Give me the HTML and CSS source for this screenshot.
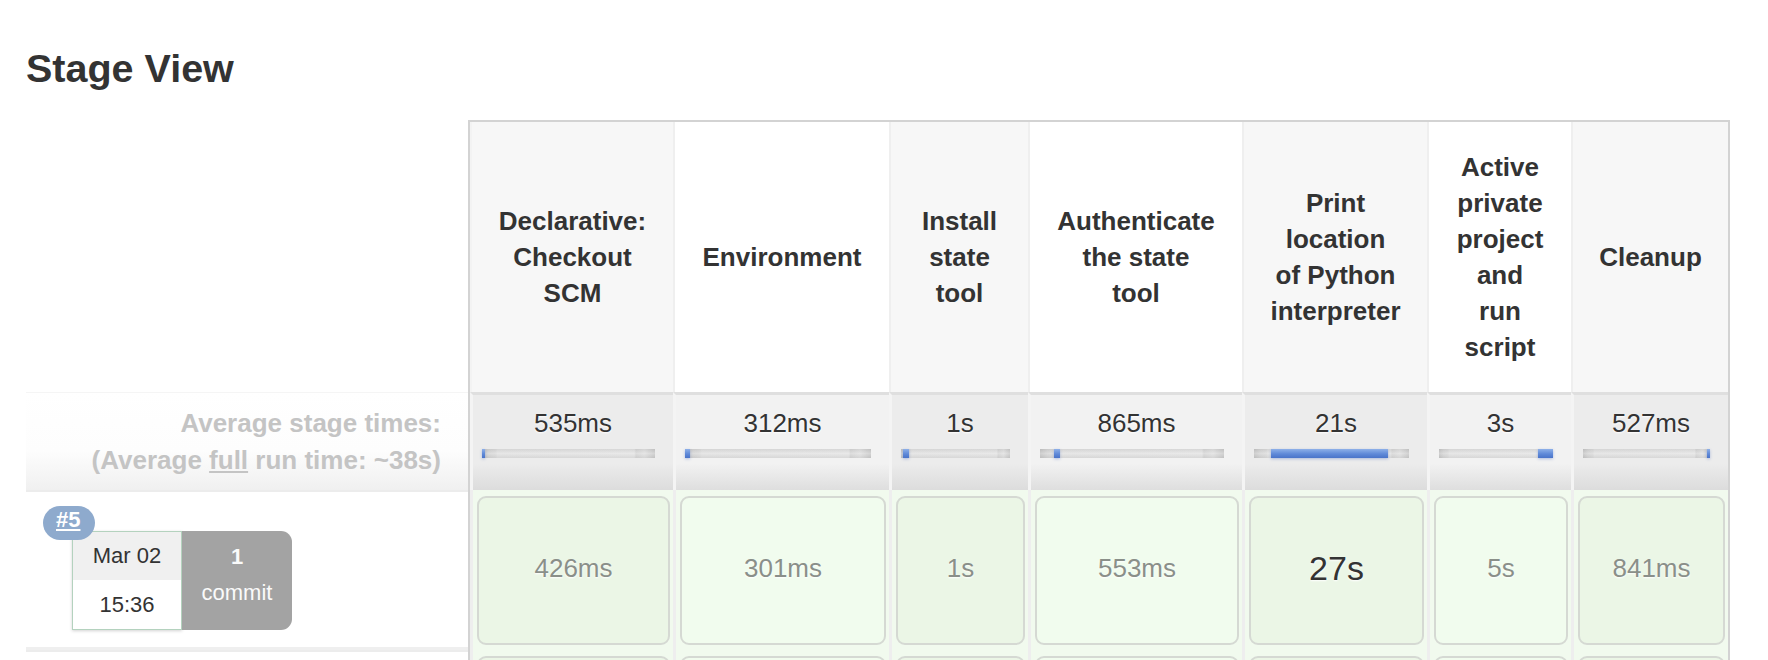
FILE: index.html
```html
<!DOCTYPE html>
<html lang="en">
<head>
<meta charset="utf-8">
<title>Stage View</title>
<link rel="stylesheet" href="styles.css">
</head>
<body>
<div class="page">
  <h2 class="title">Stage View</h2>
  <div class="stage-view">
    <div class="side">
      <div class="side-head"></div>
      <div class="side-avg">
        <div>Average stage times:</div>
        <div>(Average <span class="u">full</span> run time: ~38s)</div>
      </div>
      <div class="side-build">
        <a class="badge">#5</a>
        <div class="build-info">
          <div class="date">
            <div class="date-day">Mar 02</div>
            <div class="date-time">15:36</div>
          </div>
          <div class="commits">
            <b>1</b>
            <span>commit</span>
          </div>
        </div>
      </div>
      <div class="side-build"></div>
    </div>

    <table class="stages">
      <colgroup>
        <col class="w1"><col class="w2"><col class="w3"><col class="w4"><col class="w5"><col class="w6"><col class="w7">
      </colgroup>
      <thead>
        <tr>
          <th>Declarative:<br>Checkout<br>SCM</th>
          <th class="even">Environment</th>
          <th>Install<br>state<br>tool</th>
          <th class="even">Authenticate<br>the state<br>tool</th>
          <th>Print<br>location<br>of Python<br>interpreter</th>
          <th class="even">Active<br>private<br>project<br>and<br>run<br>script</th>
          <th>Cleanup</th>
        </tr>
      </thead>
      <tbody>
        <tr class="avg">
          <td><div class="avg-cell">535ms<div class="bar"><span class="fill" style="left:0%;width:2%"></span></div></div></td>
          <td class="even"><div class="avg-cell">312ms<div class="bar"><span class="fill" style="left:0%;width:2.7%"></span></div></div></td>
          <td><div class="avg-cell">1s<div class="bar"><span class="fill" style="left:2%;width:5.5%"></span></div></div></td>
          <td class="even"><div class="avg-cell">865ms<div class="bar"><span class="fill" style="left:7.5%;width:3.4%"></span></div></div></td>
          <td><div class="avg-cell">21s<div class="bar"><span class="fill" style="left:11%;width:75.5%"></span></div></div></td>
          <td class="even"><div class="avg-cell">3s<div class="bar"><span class="fill" style="left:86.5%;width:13.5%"></span></div></div></td>
          <td><div class="avg-cell">527ms<div class="bar"><span class="fill" style="left:97.6%;width:2.4%"></span></div></div></td>
        </tr>
        <tr class="build">
          <td><div class="cell">426ms</div></td>
          <td class="even"><div class="cell">301ms</div></td>
          <td><div class="cell">1s</div></td>
          <td class="even"><div class="cell">553ms</div></td>
          <td><div class="cell long">27s</div></td>
          <td class="even"><div class="cell">5s</div></td>
          <td><div class="cell">841ms</div></td>
        </tr>
        <tr class="build">
          <td><div class="cell"></div></td>
          <td class="even"><div class="cell"></div></td>
          <td><div class="cell"></div></td>
          <td class="even"><div class="cell"></div></td>
          <td><div class="cell"></div></td>
          <td class="even"><div class="cell"></div></td>
          <td><div class="cell"></div></td>
        </tr>
      </tbody>
    </table>
  </div>
</div>
</body>
</html>
```

FILE: styles.css
```css
html, body {
  margin: 0;
  padding: 0;
  background: #fff;
}

body {
  font-family: "Liberation Sans", Arial, Helvetica, sans-serif;
  color: #333;
}

.page {
  box-sizing: border-box;
  height: 660px;
  overflow: hidden;
  padding: 46px 0 0 26px;
}

.title {
  margin: 0;
  font-size: 39.5px;
  line-height: 45px;
  font-weight: bold;
  color: #333;
}

.stage-view {
  display: flex;
  align-items: flex-start;
  margin-top: 29px;
}

/* ---------- left column ---------- */
.side {
  flex: none;
  width: 442px;
}

.side-head {
  height: 272px;
}

.side-avg {
  box-sizing: border-box;
  height: 98px;
  padding-right: 27px;
  display: flex;
  flex-direction: column;
  justify-content: center;
  align-items: flex-end;
  font-size: 26px;
  line-height: 37px;
  font-weight: bold;
  color: #c4c4c4;
  background: linear-gradient(to bottom, #ffffff 0%, #fdfdfd 60%, #f0f0f0 100%);
  border-top: 1px solid #f5f5f5;
}

.u {
  text-decoration: underline;
}

.side-build {
  position: relative;
  box-sizing: border-box;
  height: 160px;
  padding: 39px 0 0 46px;
  background: #fff;
  border-top: 2px solid #ececec;
  border-bottom: 3px solid #efefef;
}

.badge {
  position: absolute;
  left: 17px;
  top: 14px;
  z-index: 2;
  box-sizing: border-box;
  width: 52px;
  height: 34px;
  padding-left: 13px;
  border-radius: 17px;
  background: #8eaacd;
  color: #fff;
  font-size: 22px;
  line-height: 28px;
  font-weight: bold;
  text-decoration: underline;
}

.build-info {
  display: flex;
  height: 99px;
}

.date {
  box-sizing: border-box;
  width: 110px;
  display: flex;
  flex-direction: column;
  border: 1.5px solid #b4d2be;
  background: #fff;
  box-shadow: 0 1px 3px rgba(0, 0, 0, 0.18);
  font-size: 22px;
  color: #333;
}

.date-day {
  height: 48px;
  display: flex;
  align-items: center;
  justify-content: center;
  background: #f0f0f0;
}

.date-time {
  flex: 1;
  display: flex;
  align-items: center;
  justify-content: center;
}

.commits {
  box-sizing: border-box;
  width: 110px;
  padding-top: 8px;
  display: flex;
  flex-direction: column;
  align-items: center;
  border-radius: 0 11px 11px 0;
  background: #a3a3a3;
  color: #fafafa;
  font-size: 22px;
  line-height: 36px;
}

.commits b {
  font-weight: bold;
}

/* ---------- stage table ---------- */
.stages {
  flex: none;
  width: 1262px;
  table-layout: fixed;
  border-collapse: separate;
  border-spacing: 0;
  border: 2px solid #d3d3d3;
  border-bottom: none;
}

.w1 { width: 203px; }
.w2 { width: 216px; }
.w3 { width: 139px; }
.w4 { width: 214px; }
.w5 { width: 185px; }
.w6 { width: 144px; }
.w7 { width: 157px; }

.stages th {
  height: 270px;
  padding: 0 4px;
  vertical-align: middle;
  text-align: center;
  font-size: 26px;
  line-height: 36px;
  font-weight: bold;
  color: #333;
  background: #f7f7f7;
  border-left: 2px solid #efefef;
}

.stages th:first-child {
  border-left-color: #f3f3f3;
}

.stages th.even {
  background: #fff;
}

/* average row */
.avg td {
  padding: 0;
  border-top: 3px solid #dfdfdf;
  border-left: 3px solid #f4f4f4;
  background: linear-gradient(to bottom, #ececec 0%, #ececec 72%, #dcdcdc 100%);
}

.avg td.even {
  background: linear-gradient(to bottom, #f2f2f2 0%, #f2f2f2 72%, #dedede 100%);
}

.avg-cell {
  box-sizing: border-box;
  height: 95px;
  padding-top: 10px;
  text-align: center;
  font-size: 26px;
  line-height: 36px;
  color: #333;
  text-shadow: 0 1px 2px #fff;
}

.bar {
  position: relative;
  height: 9px;
  margin: 8px 18px 0 9px;
  background:
    linear-gradient(to bottom, rgba(0, 0, 0, 0.06), rgba(255, 255, 255, 0.15) 50%, rgba(0, 0, 0, 0.05)),
    linear-gradient(to right, #c7c7c7 0, #d6d6d6 4%, #dcdcdc 8%, #e2e2e2 9%, #e4e4e4 88%, #d7d7d7 89%, #e1e1e1 94%, #cbcbcb 100%);
}

.fill {
  position: absolute;
  top: 0;
  bottom: 0;
  background: linear-gradient(to bottom, #8eb0e8 0%, #5f89d8 55%, #4a74c9 100%);
  box-shadow: 0 1px 3px rgba(50, 90, 190, 0.35);
}

/* build rows */
.build td {
  padding: 6px 3px 5px 4px;
  border-left: 3px solid #eeeeee;
  background: #f1faee;
}

.cell {
  box-sizing: border-box;
  height: 149px;
  padding-bottom: 4px;
  display: flex;
  align-items: center;
  justify-content: center;
  border: 2px solid #d5d9d3;
  border-radius: 9px;
  background: #ebf6e6;
  font-size: 26px;
  color: #8a8f89;
  text-shadow: 0 1px 2px #fff;
}

.build td.even .cell {
  background: #f1fcee;
}

.cell.long {
  font-size: 34px;
  color: #333;
}
```
